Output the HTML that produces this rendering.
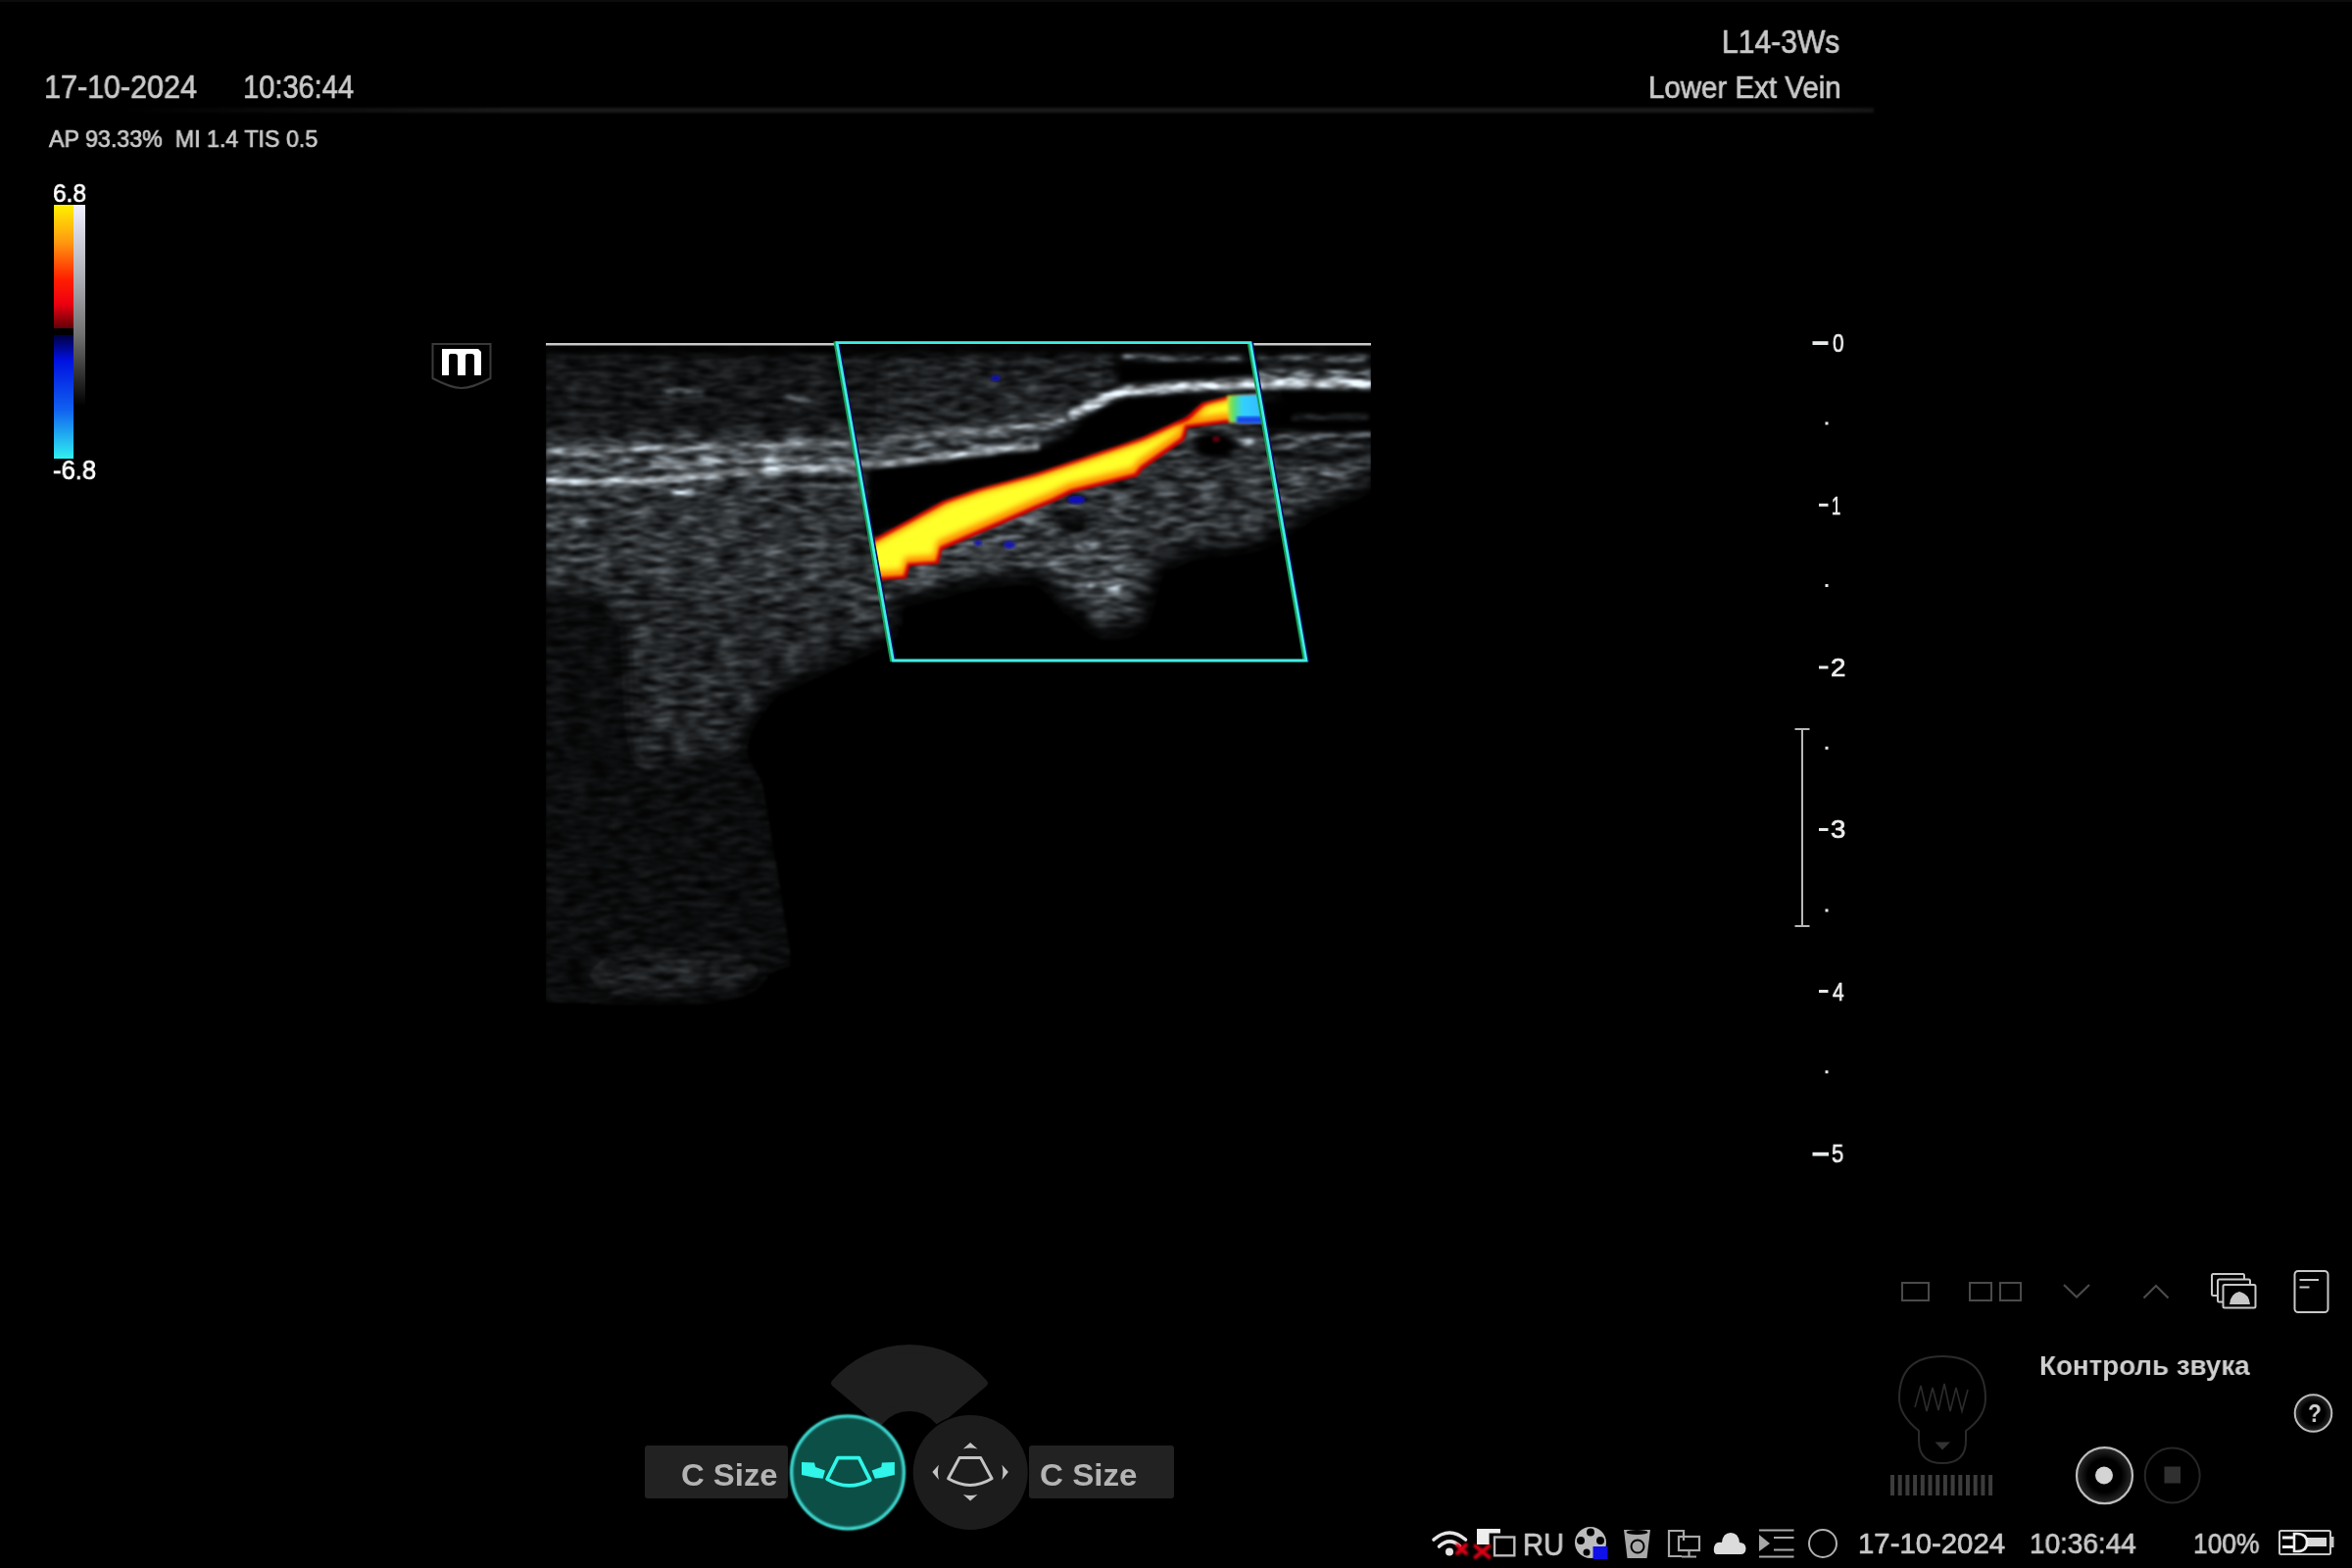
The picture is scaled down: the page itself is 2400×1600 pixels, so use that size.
<!DOCTYPE html>
<html><head><meta charset="utf-8">
<style>
html,body{margin:0;padding:0;background:#000;width:2400px;height:1600px;overflow:hidden}
body{position:relative;font-family:"Liberation Sans",sans-serif;color:#c9c9c9}
.t{position:absolute;white-space:nowrap;line-height:1;transform-origin:0 0;will-change:transform}
.m{-webkit-text-stroke:0.7px currentColor}
svg{position:absolute;left:0;top:0}
</style></head>
<body>
<div style="position:absolute;left:0;top:0;width:2400px;height:2px;background:#0c0c0c"></div>
<!-- top texts -->
<div class="t m" id="date1" style="left:45.0px;top:73.0px;font-size:32.29px;transform:scaleX(0.944);">17-10-2024</div>
<div class="t m" id="time1" style="left:248.0px;top:73.0px;font-size:32.29px;transform:scaleX(0.900);">10:36:44</div>
<div class="t m" id="ap" style="left:50.0px;top:130.0px;font-size:24.00px;transform:scaleX(0.968);">AP 93.33%&nbsp;&nbsp;MI 1.4 TIS 0.5</div>
<div class="t m" id="probe" style="left:1757.0px;top:27.0px;font-size:32.72px;transform:scaleX(0.919);">L14-3Ws</div>
<div class="t m" id="preset" style="left:1682.0px;top:73.5px;font-size:31.00px;transform:scaleX(0.951);">Lower Ext Vein</div>
<div style="position:absolute;left:120px;top:109.5px;width:1792px;height:5px;background:linear-gradient(90deg,rgba(30,30,30,0),#1a1a1a 22%,#1a1a1a 97%,#141414);filter:blur(0.8px)"></div>

<!-- color bar -->
<div class="t m" id="v68" style="left:53.5px;top:185.0px;font-size:25.85px;transform:scaleX(0.948);color:#fff">6.8</div>
<div class="t m" id="vm68" style="left:54.0px;top:466.5px;font-size:26.84px;transform:scaleX(0.956);color:#fff">-6.8</div>
<div style="position:absolute;left:55px;top:209px;width:20px;height:126px;background:linear-gradient(#fff200,#ff9a10 30%,#ff2000 60%,#ee0010 80%,#600008)"></div>
<div style="position:absolute;left:55px;top:342px;width:20px;height:126px;background:linear-gradient(#000040,#0010e0 20%,#1060f0 60%,#30f0f0)"></div>
<div style="position:absolute;left:75px;top:209px;width:12px;height:205px;background:linear-gradient(#f0f0ff,#b0b0b8 35%,#707070 65%,#000)"></div>

<!-- m logo -->
<svg width="2400" height="1600" style="pointer-events:none">
  <path d="M441.5 351 V386 Q460 396 471 396 Q482 396 500.5 386 V351 Z" fill="none" stroke="#3a3a3a" stroke-width="2"/>
  <path d="M451 356 H488 L491 359 V383 H484 V364 Q484 361 481 361 H477 Q475 361 475 364 V383 H467 V364 Q467 361 464 361 H460 Q458 361 458 364 V383 H451 Z" fill="#fff"/>
</svg>



<!-- ultrasound -->
<svg width="2400" height="1600">
<defs>
  <clipPath id="bm"><rect x="557" y="352" width="842" height="730"/></clipPath>
  <clipPath id="box"><polygon points="853.6,348 1276,348 1333,674 911.4,674"/></clipPath>
  <filter id="spk" x="557" y="352" width="842" height="730" filterUnits="userSpaceOnUse" color-interpolation-filters="sRGB">
    <feTurbulence type="fractalNoise" baseFrequency="0.045 0.15" numOctaves="2" seed="11" result="noise"/>
    <feColorMatrix in="noise" type="matrix" values="1 0 0 0 0 1 0 0 0 0 1 0 0 0 0 0 0 0 0 1" result="gn"/>
    <feComponentTransfer in="gn" result="gp"><feFuncR type="gamma" exponent="1.6"/><feFuncG type="gamma" exponent="1.6"/><feFuncB type="gamma" exponent="1.6"/></feComponentTransfer>
    <feComposite in="SourceGraphic" in2="gp" operator="arithmetic" k1="3" k2="0" k3="0" k4="0"/>
    <feGaussianBlur stdDeviation="1.1"/>
    <feColorMatrix type="matrix" values="0.93 0 0 0 0 0 1.0 0 0 0 0 0 1.05 0 0 0 0 0 1 0"/>
  </filter>
  <filter id="b10" x="-30%" y="-30%" width="160%" height="160%"><feGaussianBlur stdDeviation="9"/></filter>
  <filter id="b4" x="-30%" y="-30%" width="160%" height="160%"><feGaussianBlur stdDeviation="3.5"/></filter>
  <filter id="b2s" x="-30%" y="-50%" width="160%" height="200%"><feGaussianBlur stdDeviation="2.2"/></filter>
  <filter id="b2" x="-30%" y="-50%" width="160%" height="200%"><feGaussianBlur stdDeviation="2"/></filter>
</defs>
<g clip-path="url(#bm)">
<g filter="url(#spk)">
  <rect x="557" y="352" width="842" height="730" fill="#000"/>
  <g filter="url(#b10)">
  <polygon points="540,356 1420,356 1420,392 1258,390 1151,399 1097,417 1000,441 875,450 540,454" fill="rgb(22,22,22)"/>
  <polygon points="900,365 1130,365 1130,420 1000,438 900,442" fill="rgb(34,34,34)"/>
  <polygon points="540,452 875,447 1000,440 1089,421 1104,430 1058,457 973,467 887,476 770,484 540,500" fill="rgb(70,70,70)"/>
  <polygon points="540,500 770,486 887,478 900,560 910,640 540,640" fill="rgb(48,48,48)"/>
  <polygon points="540,598 600,592 640,630 658,700 640,760 610,805 540,805" fill="rgb(12,12,12)"/>
  <polygon points="640,598 910,620 905,648 860,668 785,702 760,737 740,790 650,800" fill="rgb(37,37,37)"/>
  <polygon points="540,795 757,760 778,800 795,900 808,985 730,1010 624,1024 540,1022" fill="rgb(15,15,15)"/>
  <ellipse cx="690" cy="995" rx="85" ry="22" fill="rgb(28,28,28)" opacity="1"/>
  <polygon points="880,556 961,512 1053,484 1163,448 1210,426 1226,411 1290,404 1320,440 1399,452 1399,489 1338,516 1302,540 1279,551 1207,560 1175,580 1160,636 1125,642 1090,612 1064,582 993,588 910,610 900,640 880,640" fill="rgb(50,50,50)"/>
  <polygon points="930,580 990,556 1060,548 1140,552 1165,575 1150,615 1110,610 1060,575 990,582 930,600" fill="rgb(66,66,66)"/>
  <polygon points="1290,445 1399,445 1399,485 1338,514 1302,537" fill="rgb(55,55,55)"/>
  </g>
  <g filter="url(#b4)">
  <polygon points="885,474 973,467 1020,457 1058,457 1089,447 1104,430 1127,412 1158,405 1180,404.5 1258,405 1284,404 1226,411 1210,425.7 1162.5,447.6 1107.7,465.9 1052.8,484.2 998,498.8 961.4,511.6 924.8,531.7 885,552" fill="rgb(4,4,4)"/>
  <polygon points="1140,368 1285,368 1285,384 1258,386 1151,393 1140,396" fill="rgb(3,3,3)"/>
  <polygon points="1285,408 1399,408 1399,440 1285,440" fill="rgb(5,5,5)"/>
  <polygon points="1300,462 1399,459 1399,470 1300,474" fill="rgb(10,10,10)"/>
  <ellipse cx="1240" cy="455" rx="22" ry="14" fill="rgb(6,6,6)" opacity="1"/>
  <ellipse cx="1094" cy="534" rx="16" ry="13" fill="rgb(16,16,16)" opacity="1"/>
  <polygon points="928,592 961,560 1016,535 1077,510 1077,528 1000,560 930,604" fill="rgb(72,72,72)"/>
  <polygon points="540,352 1420,352 1420,360 540,360" fill="rgb(6,6,6)"/>
  </g>
  <g filter="url(#b2)">
  <path d="M557 462 Q680 458 770 455 T880 450" stroke="rgb(130,130,130)" stroke-width="4" fill="none" stroke-linecap="round" opacity="1"/>
  <path d="M665 473 Q740 471 822 468" stroke="rgb(130,130,130)" stroke-width="4" fill="none" stroke-linecap="round" opacity="1"/>
  <path d="M557 491 Q620 496 722 485 Q770 480 875 476 Q930 470 973 466 Q1020 458 1058 456" stroke="rgb(170,170,170)" stroke-width="5" fill="none" stroke-linecap="round" opacity="1"/>
  <path d="M905 448 Q960 440 1000 441 L1085 428" stroke="rgb(115,115,115)" stroke-width="4" fill="none" stroke-linecap="round" opacity="1"/>
  <path d="M920 462 Q980 455 1050 446" stroke="rgb(100,100,100)" stroke-width="3" fill="none" stroke-linecap="round" opacity="1"/>
  <path d="M1095 423 Q1120 408 1150 399 Q1200 395 1258 392 Q1330 390 1399 392" stroke="rgb(185,185,185)" stroke-width="10" fill="none" stroke-linecap="round" opacity="1"/>
  <path d="M1285 382 Q1340 380 1399 381" stroke="rgb(120,120,120)" stroke-width="5" fill="none" stroke-linecap="round" opacity="1"/>
  <path d="M1147 364 L1267 366" stroke="rgb(105,105,105)" stroke-width="4" fill="none" stroke-linecap="round" opacity="1"/>
  <path d="M1285 365 L1392 366" stroke="rgb(100,100,100)" stroke-width="4" fill="none" stroke-linecap="round" opacity="1"/>
  <path d="M1320 426 Q1370 425 1395 425" stroke="rgb(70,70,70)" stroke-width="3" fill="none" stroke-linecap="round" opacity="1"/>
  <path d="M1300 448 Q1350 446 1399 444" stroke="rgb(110,110,110)" stroke-width="4" fill="none" stroke-linecap="round" opacity="1"/>
  <path d="M1330 480 Q1370 476 1399 474" stroke="rgb(100,100,100)" stroke-width="4" fill="none" stroke-linecap="round" opacity="1"/>
  <path d="M1320 500 Q1360 478 1399 468" stroke="rgb(95,95,95)" stroke-width="4" fill="none" stroke-linecap="round" opacity="1"/>
  <ellipse cx="1127" cy="600" rx="17" ry="6" fill="rgb(175,175,175)" opacity="1"/>
  <ellipse cx="1110" cy="556" rx="14" ry="3" fill="rgb(150,150,150)" opacity="1"/>
  <ellipse cx="1140" cy="520" rx="10" ry="3" fill="rgb(110,110,110)" opacity="1"/>
  <ellipse cx="697" cy="502" rx="12" ry="5" fill="rgb(135,135,135)" opacity="1"/>
  <ellipse cx="590" cy="533" rx="10" ry="4" fill="rgb(120,120,120)" opacity="1"/>
  <ellipse cx="698" cy="401" rx="22" ry="5" fill="rgb(80,80,80)" opacity="1"/>
  <ellipse cx="813" cy="407" rx="14" ry="5" fill="rgb(80,80,80)" opacity="1"/>
  <ellipse cx="1272" cy="451" rx="8" ry="4" fill="rgb(110,110,110)" opacity="1"/>
  </g>
</g>
</g>
<g clip-path="url(#bm)" filter="url(#b2s)" opacity="0.5" style="mix-blend-mode:screen">
  <path d="M557 463 Q680 458 770 455 T880 450" stroke="rgb(150,150,150)" stroke-width="3" fill="none" stroke-linecap="round" opacity="1"/>
  <path d="M665 473 Q740 471 822 468" stroke="rgb(140,140,140)" stroke-width="3" fill="none" stroke-linecap="round" opacity="1"/>
  <path d="M557 492 Q620 496 722 485 Q770 480 875 476 Q930 470 973 466 Q1020 458 1058 456" stroke="rgb(190,190,190)" stroke-width="3.5" fill="none" stroke-linecap="round" opacity="1"/>
  <path d="M1095 423 Q1120 408 1150 399 Q1200 395 1258 392 Q1330 390 1399 392" stroke="rgb(200,200,200)" stroke-width="6" fill="none" stroke-linecap="round" opacity="1"/>
  <path d="M905 448 Q960 440 1000 441 L1085 428" stroke="rgb(130,130,130)" stroke-width="3" fill="none" stroke-linecap="round" opacity="1"/>
</g>
<rect x="557" y="350" width="297" height="2.5" fill="#c8c8c8"/><rect x="1276" y="350" width="123" height="2.5" fill="#c8c8c8"/>
</svg>
<!-- color flow -->
<svg width="2400" height="1600">
<defs>
  <linearGradient id="vg" gradientUnits="userSpaceOnUse" x1="1000" y1="470" x2="1040" y2="560">
    <stop offset="0" stop-color="#d00000"/>
    <stop offset="0.18" stop-color="#ff8a00"/>
    <stop offset="0.4" stop-color="#ffff1a"/>
    <stop offset="0.62" stop-color="#fff21a"/>
    <stop offset="0.82" stop-color="#ff8000"/>
    <stop offset="1" stop-color="#c80000"/>
  </linearGradient>
  <linearGradient id="cg" gradientUnits="userSpaceOnUse" x1="1250" y1="0" x2="1290" y2="0">
    <stop offset="0" stop-color="#f8e020"/>
    <stop offset="0.2" stop-color="#60e060"/>
    <stop offset="0.45" stop-color="#30d0ff"/>
    <stop offset="1" stop-color="#30b8ff"/>
  </linearGradient>
  <filter id="vb" x="-10%" y="-10%" width="120%" height="120%"><feGaussianBlur stdDeviation="1.5"/></filter>
  <filter id="vflow" x="-5%" y="-20%" width="110%" height="140%" color-interpolation-filters="sRGB">
    <feGaussianBlur in="SourceAlpha" stdDeviation="1.0" result="a0"/>
    <feFlood flood-color="#d00000"/><feComposite in2="a0" operator="in" result="r"/>
    <feMorphology in="SourceAlpha" operator="erode" radius="2.5" result="e1"/>
    <feGaussianBlur in="e1" stdDeviation="1.8" result="e1b"/>
    <feFlood flood-color="#ff8c00"/><feComposite in2="e1b" operator="in" result="o"/>
    <feMorphology in="SourceAlpha" operator="erode" radius="6" result="e2"/>
    <feOffset in="e2" dx="1" dy="-3" result="e2o"/>
    <feComposite in="e2o" in2="SourceAlpha" operator="in" result="e2c"/>
    <feGaussianBlur in="e2c" stdDeviation="3.2" result="e2b"/>
    <feFlood flood-color="#ffff2a"/><feComposite in2="e2b" operator="in" result="y"/>
    <feMerge><feMergeNode in="r"/><feMergeNode in="o"/><feMergeNode in="y"/></feMerge>
  </filter>
  <filter id="vb4" x="-10%" y="-20%" width="120%" height="140%"><feGaussianBlur stdDeviation="4"/></filter>
</defs>
<g clip-path="url(#box)">
  <polygon filter="url(#vflow)" points="880,556 924.8,531.7 961.4,511.6 998,498.8 1052.8,484.2 1107.7,465.9 1162.5,447.6 1210,425.7 1226.5,411 1255.7,403.8 1290,402 1290,432 1254,431.2 1211.9,436.7 1208.2,449.5 1166.2,478.7 1160.7,486 1094.9,502.5 1076.6,511.6 1058.3,519 1025.4,533.6 961.4,561 957.8,575.6 928.5,577.4 924.8,590.2 899.3,592 880,590" fill="#c40000"/>
  <polygon points="1252,403.8 1290,402 1290,432 1254,431.2" fill="url(#cg)" filter="url(#vb)"/>
  <rect x="1262" y="425" width="30" height="7" fill="#1848e8" filter="url(#vb)"/>
  <ellipse cx="1098.5" cy="510" rx="9" ry="4" fill="#1010c0" filter="url(#vb)"/>
  <ellipse cx="1030" cy="556" rx="6" ry="4" fill="#1818b0" filter="url(#vb)"/>
  <ellipse cx="998" cy="554" rx="4" ry="3" fill="#1818b0" filter="url(#vb)"/>
  <ellipse cx="1016" cy="386" rx="5" ry="3" fill="#1010b0" filter="url(#vb)"/>
  <ellipse cx="1241" cy="448" rx="4" ry="3" fill="#600010" filter="url(#vb)"/>
</g>
<polygon points="851.8,349.6 1273.8,349.6 1330.8,674 909.2,674" fill="none" stroke="#169a50" stroke-width="2.4"/>
<polygon points="856,349.6 1278,349.6 1335,674 913.4,674" fill="none" stroke="#0a0a60" stroke-width="2"/>
<polygon points="854,349.6 1276,349.6 1333,674 911.4,674" fill="none" stroke="#40ece4" stroke-width="2.8" stroke-linejoin="miter"/>
</svg>


<!-- depth scale -->
<svg width="2400" height="1600">
  <g fill="#e6eaea">
    <rect x="1849.5" y="348.2" width="16" height="3.8"/>
    <rect x="1849.5" y="1175.8" width="16.5" height="3.8"/>
    <rect x="1856" y="513.8" width="9.5" height="3"/>
    <rect x="1856" y="679.5" width="9.5" height="3"/>
    <rect x="1856" y="845" width="9.5" height="3"/>
    <rect x="1856" y="1010" width="9.5" height="3"/>
    <rect x="1862.5" y="430.5" width="3" height="3"/>
    <rect x="1862.5" y="596" width="3" height="3"/>
    <rect x="1862.5" y="761.8" width="3" height="3"/>
    <rect x="1862.5" y="927.5" width="3" height="3"/>
    <rect x="1862.5" y="1092.3" width="3" height="3"/>
  </g>
  <g fill="none" stroke="#b8b8b8" stroke-width="2">
    <path d="M1831.5 744 H1846.5 M1839 744 V945 M1831.5 945 H1846.5"/>
  </g>
</svg>
<div class="t m" id="d0" style="left:1869.5px;top:337.0px;font-size:26.03px;transform:scaleX(0.797);color:#eee">0</div>
<div class="t m" id="d1" style="left:1869.0px;top:504.0px;font-size:25.60px;transform:scaleX(0.653);color:#eee">1</div>
<div class="t m" id="d2" style="left:1868.0px;top:669.0px;font-size:25.17px;transform:scaleX(1.102);color:#eee">2</div>
<div class="t m" id="d3" style="left:1868.0px;top:834.0px;font-size:25.00px;transform:scaleX(1.102);color:#eee">3</div>
<div class="t m" id="d4" style="left:1869.5px;top:999.0px;font-size:26.56px;transform:scaleX(0.791);color:#eee">4</div>
<div class="t m" id="d5" style="left:1869.0px;top:1165.0px;font-size:25.00px;transform:scaleX(0.884);color:#eee">5</div>


<!-- bottom controls -->
<svg width="2400" height="1600">
  <defs>
    <filter id="glow" x="-20%" y="-20%" width="140%" height="140%"><feGaussianBlur stdDeviation="0.9"/></filter>
  </defs>
  <path d="M852.2 1411.4 A99 99 0 0 1 1003.8 1411.4 L957.9 1449.9 A39 39 0 0 0 898.1 1449.9 Z" fill="#1e1e1e" stroke="#1e1e1e" stroke-width="8" stroke-linejoin="round"/>
  <rect x="658" y="1475" width="146" height="54" rx="3" fill="#222"/>
  <rect x="1050" y="1475" width="148" height="54" rx="3" fill="#222"/>
  <circle cx="990.2" cy="1502.5" r="60" fill="#000"/>
  <circle cx="990.2" cy="1502.5" r="58.5" fill="#1c1c1c"/>
  <circle cx="865" cy="1502.5" r="59" fill="#0b4f46"/>
  <circle cx="865" cy="1502.5" r="57.3" fill="none" stroke="#48f0e8" stroke-width="2.8" filter="url(#glow)"/>
  <g fill="none" stroke="#30f5e8" stroke-width="3.6" stroke-linejoin="round">
    <path d="M854.9 1487.6 L876.5 1487.6 L887.9 1510.4 Q865 1522 844 1509.3 Z"/>
  </g>
  <path d="M818 1492 L831 1492.5 L832.1 1496.9 L841.9 1500.6 L839.7 1508.8 L831 1507.7 L818 1505 Z" fill="#30f5e8"/>
  <path d="M912.9 1492 L899.9 1492.5 L899.3 1496.9 L889.6 1500.6 L892.8 1508.8 L900.4 1507.7 L912.9 1505 Z" fill="#30f5e8"/>
  <g fill="none" stroke="#c4c4c4" stroke-width="3" stroke-linejoin="round">
    <path d="M979 1487.6 L1000.7 1487.6 L1012.1 1508.8 Q990 1522 967.6 1508.8 Z"/>
  </g>
  <g fill="#c4c4c4">
    <path d="M990.1 1471.9 L997.5 1478.4 Q990 1476.5 982.8 1478.4 Z"/>
    <path d="M990.1 1531.5 L997.5 1525 Q990 1527 982.8 1525 Z"/>
    <path d="M951.4 1502 L957.9 1494.7 Q956 1502 957.9 1509.9 Z"/>
    <path d="M1028.9 1502 L1022.4 1494.7 Q1024.4 1502 1022.4 1509.9 Z"/>
  </g>
</svg>

<div class="t" id="cs1" style="left:695.0px;top:1489.5px;font-size:30.44px;transform:scaleX(1.080);font-weight:bold;color:#b4b4b4">C Size</div>
<div class="t" id="cs2" style="left:1060.5px;top:1489.5px;font-size:30.44px;transform:scaleX(1.090);font-weight:bold;color:#b4b4b4">C Size</div>


<!-- right panel icons -->
<svg width="2400" height="1600">
  <g fill="none" stroke="#4a4a4a" stroke-width="2">
    <rect x="1941" y="1309" width="27" height="18"/>
    <rect x="2010" y="1309" width="22" height="18"/>
    <rect x="2041" y="1309" width="21" height="18"/>
    <path d="M2106 1311 L2119 1323.5 L2132 1311" stroke-width="2.2"/>
    <path d="M2187.5 1324.5 L2200 1312 L2212.5 1324.5" stroke-width="2.2"/>
  </g>
  <g fill="#000" stroke="#c8c8c8" stroke-width="2">
    <rect x="2257" y="1300" width="33" height="22" rx="1.5"/>
    <rect x="2263" y="1305.5" width="33" height="23" rx="1.5"/>
    <rect x="2268.5" y="1311" width="33" height="23.5" rx="1.5"/>
    <rect x="2341.5" y="1297" width="34" height="42" rx="3.5"/>
  </g>
  <path d="M2275 1331 Q2276 1320 2285 1318 Q2295 1320 2296 1331 Z" fill="#c8c8c8"/>
  <g stroke="#c8c8c8" stroke-width="2"><path d="M2346.5 1306 H2366 M2346.5 1313.5 H2356.5"/></g>
  <!-- bulb -->
  <g fill="none" stroke="#2a2a2a" stroke-width="2">
    <path d="M1958 1460 Q1938 1444 1938 1427 Q1938 1384 1982 1384 Q2026 1384 2026 1427 Q2026 1446 2006 1460 V1470 Q2006 1493 1982 1493 Q1958 1493 1958 1470 Z"/>
    <path d="M1954 1436 L1960 1414 L1966 1440 L1972 1416 L1978 1439 L1984 1412 L1990 1440 L1996 1416 L2002 1440 L2008 1418" stroke="#2c2c2c" stroke-width="1.6"/>
  </g>
  <path d="M1974.5 1471.5 H1990 L1982 1479.5 Z" fill="#333"/>
  <g fill="#3c3c3c">
    <rect x="1929" y="1505" width="4" height="21"/><rect x="1936.7" y="1505" width="4" height="21"/>
    <rect x="1944.4" y="1505" width="4" height="21"/><rect x="1952.1" y="1505" width="4" height="21"/>
    <rect x="1959.8" y="1505" width="4" height="21"/><rect x="1967.5" y="1505" width="4" height="21"/>
    <rect x="1975.2" y="1505" width="4" height="21"/><rect x="1982.9" y="1505" width="4" height="21"/>
    <rect x="1990.6" y="1505" width="4" height="21"/><rect x="1998.3" y="1505" width="4" height="21"/>
    <rect x="2006" y="1505" width="4" height="21"/><rect x="2013.7" y="1505" width="4" height="21"/>
    <rect x="2021.4" y="1505" width="4" height="21"/><rect x="2029.1" y="1505" width="4" height="21"/>
  </g>
  <defs>
    <radialGradient id="rg1"><stop offset="0.6" stop-color="#000"/><stop offset="1" stop-color="#2a2a2a"/></radialGradient>
  </defs>
  <circle cx="2147.5" cy="1505.7" r="28.5" fill="url(#rg1)" stroke="#bdbdbd" stroke-width="2.2"/>
  <circle cx="2147" cy="1505.5" r="9" fill="#d4d4d4"/>
  <circle cx="2216.7" cy="1505.5" r="28" fill="none" stroke="#262626" stroke-width="2"/>
  <rect x="2208.5" y="1496.5" width="16.5" height="17" fill="#303030"/>
  <circle cx="2360.5" cy="1442" r="18.8" fill="url(#rg1)" stroke="#bdbdbd" stroke-width="2"/>
</svg>
<div class="t" id="q" style="left:2354.5px;top:1430.0px;font-size:24.94px;transform:scaleX(0.906);font-weight:bold;color:#d0d0d0">?</div>

<!-- right panel -->
<div class="t" id="snd" style="left:2080.5px;top:1379.0px;font-size:28.50px;transform:scaleX(0.973);font-weight:bold;color:#cfcfcf">Контроль звука</div>

<!-- status bar icons -->
<svg width="2400" height="1600">
  <defs><filter id="rb" x="-30%" y="-30%" width="160%" height="160%"><feGaussianBlur stdDeviation="0.9"/></filter></defs>
  <g fill="none" stroke="#e4e4e4" stroke-width="3.6" stroke-linecap="round">
    <path d="M1463 1571 Q1479 1557 1495.5 1571"/>
    <path d="M1468.5 1578 Q1479 1568 1489.5 1577.5"/>
  </g>
  <circle cx="1479" cy="1583.5" r="4" fill="#e4e4e4"/>
  <g stroke="#e00018" stroke-width="4" stroke-linecap="round" filter="url(#rb)">
    <path d="M1487 1576.5 L1496 1585 M1496 1576.5 L1487 1585"/>
    <path d="M1505.5 1577.5 L1519.5 1589 M1519.5 1577.5 L1505.5 1589"/>
  </g>
  <path d="M1507 1560 H1531 V1564.5 H1519.6 V1576 H1507 Z" fill="#eeeeee"/>
  <rect x="1525" y="1568.5" width="20.3" height="18.8" fill="none" stroke="#bcbcbc" stroke-width="2.4"/>
<!-- film reel -->
  <circle cx="1623" cy="1574" r="16" fill="#bcbcbc"/>
  <circle cx="1623" cy="1563.5" r="4" fill="#000"/>
  <circle cx="1613" cy="1572" r="4" fill="#000"/>
  <circle cx="1633" cy="1572" r="4" fill="#000"/>
  <circle cx="1619" cy="1584" r="3.5" fill="#000"/>
  <rect x="1625.5" y="1578" width="15" height="13" fill="#1010e8"/>
  <!-- bucket -->
  <path d="M1657 1561 H1684 L1680.5 1590 H1660.5 Z" fill="#a8a8a8"/>
  <ellipse cx="1670.5" cy="1563.5" rx="11" ry="2.5" fill="#000"/>
  <circle cx="1671" cy="1578" r="6.5" fill="none" stroke="#000" stroke-width="2"/>
  <!-- computer -->
  <g fill="none" stroke="#a8a8a8" stroke-width="2.2">
    <path d="M1718 1572 V1562 H1703 V1588 H1716"/>
    <rect x="1713" y="1568" width="21" height="14"/>
    <path d="M1723.5 1582 V1588 M1716 1588.5 H1731"/>
  </g>
  <!-- cloud -->
  <path d="M1752 1586 Q1748 1586 1749 1579 Q1750 1573 1757 1574 Q1758 1564 1766 1564 Q1774 1564 1775 1574 Q1781 1574 1781.5 1580 Q1781.5 1586 1776 1586 Z" fill="#dcdcdc"/>
  <!-- list -->
  <g stroke="#a8a8a8" stroke-width="2.2">
    <path d="M1795 1561.5 H1830.5 M1810 1569 H1830.5 M1810 1581.5 H1830.5 M1795 1588.5 H1830.5"/>
  </g>
  <path d="M1795 1566 L1806 1575 L1795 1583 Z" fill="#a8a8a8"/>
  <circle cx="1860" cy="1575" r="14" fill="none" stroke="#b0b0b0" stroke-width="2"/>
  <!-- battery -->
  <g fill="none" stroke="#c8c8c8" stroke-width="2">
    <rect x="2326" y="1562" width="52" height="24" rx="1.5"/>
  </g>
  <rect x="2378" y="1568" width="3.5" height="11" fill="#c8c8c8"/>
  <rect x="2353" y="1569" width="21" height="9" fill="#d8d8d8"/>
  <path d="M2341 1565 H2344 Q2354 1565 2354 1574 Q2354 1583 2344 1583 H2341 Z" fill="#000" stroke="#f0f0f0" stroke-width="2.6"/>
  <path d="M2329 1569 H2341 M2329 1578.5 H2341" stroke="#f0f0f0" stroke-width="3"/>
</svg>

<div class="t m" id="date2" style="left:1895.5px;top:1560.5px;font-size:29.03px;transform:scaleX(1.011);color:#c8c8c8">17-10-2024</div>
<div class="t m" id="time2" style="left:2070.5px;top:1560.5px;font-size:29.03px;transform:scaleX(0.963);color:#c8c8c8">10:36:44</div>
<div class="t m" id="pct" style="left:2237.5px;top:1560.5px;font-size:29.03px;transform:scaleX(0.909);color:#c8c8c8">100%</div>
<div class="t m" id="ru" style="left:1553.5px;top:1560.5px;font-size:31.44px;transform:scaleX(0.922);color:#c8c8c8">RU</div>
</body></html>
